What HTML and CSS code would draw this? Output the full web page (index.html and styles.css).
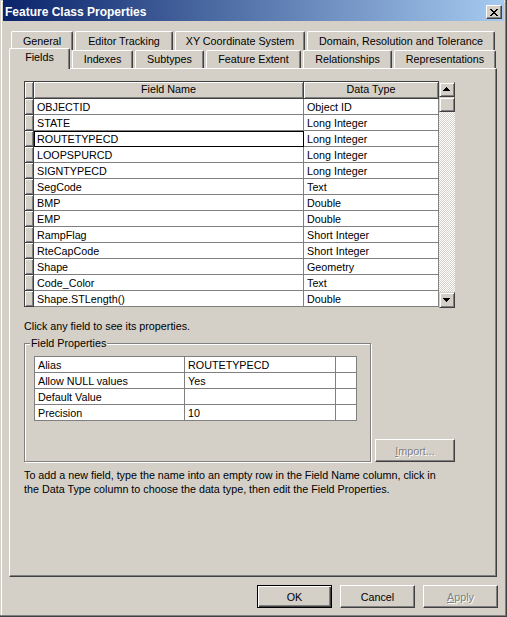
FILE: index.html
```html
<!DOCTYPE html>
<html lang="en">
<head>
    <meta charset="UTF-8">
    <meta name="viewport" content="width=device-width, initial-scale=1.0">
    <title>Feature Class Properties</title>
    <link rel="stylesheet" href="styles.css">
</head>
<body>
    <div class="window">
        <div class="titlebar">
            <span class="title">Feature Class Properties</span>
            <button class="close">
                <svg width="8" height="7" viewBox="0 0 8 7"><path d="M0 0h2v1H0zM6 0h2v1H6zM1 1h2v1H1zM5 1h2v1H5zM2 2h4v1H2zM3 3h2v1H3zM2 4h4v1H2zM1 5h2v1H1zM5 5h2v1H5zM0 6h2v1H0zM6 6h2v1H6z" fill="#000"/></svg>
            </button>
        </div>

        <div class="dialog">
            <div class="tab-row back">
                <div class="tab t-general">General</div>
                <div class="tab t-editor">Editor Tracking</div>
                <div class="tab t-xy">XY Coordinate System</div>
                <div class="tab t-domain">Domain, Resolution and Tolerance</div>
            </div>
            <div class="tab-row front">
                <div class="tab t-fields active">Fields</div>
                <div class="tab t-indexes">Indexes</div>
                <div class="tab t-subtypes">Subtypes</div>
                <div class="tab t-extent">Feature Extent</div>
                <div class="tab t-rel">Relationships</div>
                <div class="tab t-rep">Representations</div>
            </div>

            <div class="panel">
                <div class="grid">
                    <div class="fields">
                        <div class="hd"></div>
                        <div class="hd">Field Name</div>
                        <div class="hd">Data Type</div>

                        <div class="rh"></div><div class="cell">OBJECTID</div><div class="cell">Object ID</div>
                        <div class="rh"></div><div class="cell">STATE</div><div class="cell">Long Integer</div>
                        <div class="rh"></div><div class="cell current">ROUTETYPECD</div><div class="cell">Long Integer</div>
                        <div class="rh"></div><div class="cell">LOOPSPURCD</div><div class="cell">Long Integer</div>
                        <div class="rh"></div><div class="cell">SIGNTYPECD</div><div class="cell">Long Integer</div>
                        <div class="rh"></div><div class="cell">SegCode</div><div class="cell">Text</div>
                        <div class="rh"></div><div class="cell">BMP</div><div class="cell">Double</div>
                        <div class="rh"></div><div class="cell">EMP</div><div class="cell">Double</div>
                        <div class="rh"></div><div class="cell">RampFlag</div><div class="cell">Short Integer</div>
                        <div class="rh"></div><div class="cell">RteCapCode</div><div class="cell">Short Integer</div>
                        <div class="rh"></div><div class="cell">Shape</div><div class="cell">Geometry</div>
                        <div class="rh"></div><div class="cell">Code_Color</div><div class="cell">Text</div>
                        <div class="rh"></div><div class="cell">Shape.STLength()</div><div class="cell">Double</div>
                    </div>
                    <div class="scroll">
                        <div class="sbtn up">
                            <svg width="16" height="15" viewBox="0 0 16 15"><path d="M7 5h1v1h1v1h1v1h1v1H4V8h1V7h1V6h1z" fill="#000"/></svg>
                        </div>
                        <div class="sbtn thumb"></div>
                        <div class="track"></div>
                        <div class="sbtn down">
                            <svg width="16" height="16" viewBox="0 0 16 16"><path d="M4 6h7v1h-1v1h-1v1h-1v1H7V9H6V8H5V7H4z" fill="#000"/></svg>
                        </div>
                    </div>
                </div>

                <p class="hint">Click any field to see its properties.</p>

                <div class="props-row">
                    <fieldset class="props">
                        <legend>Field Properties</legend>
                        <div class="ptable">
                            <div class="pcell">Alias</div><div class="pcell">ROUTETYPECD</div><div class="pcell"></div>
                            <div class="pcell">Allow NULL values</div><div class="pcell">Yes</div><div class="pcell"></div>
                            <div class="pcell">Default Value</div><div class="pcell"></div><div class="pcell"></div>
                            <div class="pcell">Precision</div><div class="pcell">10</div><div class="pcell"></div>
                        </div>
                    </fieldset>
                    <button class="btn import" disabled><u>I</u>mport...</button>
                </div>

                <p class="help">To add a new field, type the name into an empty row in the Field Name column, click in<br>the Data Type column to choose the data type, then edit the Field Properties.</p>
            </div>

            <div class="buttons">
                <button class="btn default">OK</button>
                <button class="btn">Cancel</button>
                <button class="btn" disabled><u>A</u>pply</button>
            </div>
        </div>
    </div>
</body>
</html>
```

FILE: styles.css
```css
* {
    box-sizing: border-box;
}
body {
    margin: 0;
    background-color: #d4d0c8;
    font-family: "Liberation Sans", Arial, sans-serif;
    font-size: 10.75px;
    color: #000;
}
.window {
    width: 507px;
    height: 617px;
    padding: 0 3px 3px 3px;
    box-shadow: inset -1px -1px #404040, inset -2px -2px #808080, inset 1px 1px #d4d0c8, inset 2px 2px #fff;
}

/* caption */
.titlebar {
    height: 21px;
    padding: 3px 2px 0 2px;
    display: flex;
    align-items: center;
    justify-content: space-between;
    background: linear-gradient(to right, #0a246a, #a6caf0);
}
.title {
    color: #fff;
    font-weight: bold;
    font-size: 12px;
}
.close {
    width: 16px;
    height: 14px;
    padding: 0;
    margin: 0;
    display: flex;
    align-items: center;
    justify-content: center;
    background: #d4d0c8;
    border: 1px solid;
    border-color: #fff #404040 #404040 #fff;
    box-shadow: inset -1px -1px #808080;
}

.dialog {
    padding: 10px 7px 0 6px;
}

/* tabs */
.tab-row {
    display: flex;
    gap: 2px;
}
.tab-row.back {
    height: 19px;
    padding-left: 2px;
}
.tab-row.front {
    height: 18px;
}
.tab {
    border: 1px solid;
    border-color: #fff #404040 #fff #fff;
    border-bottom: none;
    border-radius: 2px 2px 0 0;
    box-shadow: inset -1px 0 #808080;
    background: #d4d0c8;
    text-align: center;
    white-space: nowrap;
}
.back .tab {
    height: 19px;
    line-height: 18px;
}
.front .tab {
    height: 18px;
    line-height: 16px;
}
.front .tab.active {
    position: relative;
    height: 21px;
    margin-top: -2px;
}
.t-general { width: 62px; }
.t-editor { width: 98px; }
.t-xy { width: 130px; }
.t-domain { width: 188px; }
.t-fields { width: 61px; }
.t-indexes { width: 61px; }
.t-subtypes { width: 69px; }
.t-extent { width: 95px; }
.t-rel { width: 89px; }
.t-rep { width: 102px; }

.panel {
    height: 509px;
    padding: 12px 0 0 14px;
    border: 1px solid;
    border-color: #fff #404040 #404040 #fff;
    box-shadow: inset -1px -1px #808080;
}

/* fields grid */
.grid {
    display: flex;
    align-items: flex-start;
}
.fields {
    display: grid;
    grid-template-columns: 9px 270px 135px;
    grid-template-rows: 17px;
    grid-auto-rows: 16px;
    border-left: 1px solid #404040;
    border-top: 1px solid #404040;
}
.hd {
    background: #d4d0c8;
    border-right: 1px solid #404040;
    border-bottom: 1px solid #404040;
    box-shadow: inset 1px 1px #fff, inset -1px -1px #808080;
    text-align: center;
    line-height: 15px;
}
.rh {
    background: #d4d0c8;
    border-right: 1px solid #404040;
    border-bottom: 1px solid #404040;
    box-shadow: inset 1px 1px #fff, inset -1px -1px #808080;
}
.cell {
    background: #fff;
    border-right: 1px solid #808080;
    border-bottom: 1px solid #808080;
    padding-left: 3px;
    line-height: 16px;
    white-space: nowrap;
    overflow: hidden;
}
.cell.current {
    border-color: #000;
    box-shadow: inset 1px 1px #000;
}

.scroll {
    width: 16px;
    height: 226px;
    margin-top: 1px;
    display: flex;
    flex-direction: column;
}
.sbtn {
    background: #d4d0c8;
    border: 1px solid;
    border-color: #d4d0c8 #404040 #404040 #d4d0c8;
    box-shadow: inset 1px 1px #fff, inset -1px -1px #808080;
    display: flex;
    align-items: center;
    justify-content: center;
}
.sbtn svg {
    flex: none;
}
.sbtn.up {
    height: 15px;
}
.sbtn.thumb {
    height: 15px;
}
.sbtn.down {
    height: 16px;
}
.track {
    flex: 1;
    background: repeating-conic-gradient(#fff 0 25%, #d4d0c8 0 50%) 0 0 / 2px 2px;
}

.hint {
    margin: 11px 0 0;
    line-height: 14px;
}

/* field properties group */
.props-row {
    display: flex;
    align-items: flex-end;
    gap: 4px;
    margin-top: 4px;
}
.props {
    width: 347px;
    margin: 0;
    padding: 0 0 40px 9px;
    border: 1px solid #808080;
    box-shadow: inset 1px 1px #fff, 1px 1px #fff;
    min-width: 0;
}
.props legend {
    margin-left: -4px;
    padding: 0 1px;
    line-height: 13px;
    background: #d4d0c8;
}
.ptable {
    display: grid;
    grid-template-columns: 150px 151px 21px;
    grid-auto-rows: 16px;
    width: 323px;
    margin-top: 6px;
    border-left: 1px solid #808080;
    border-top: 1px solid #808080;
}
.pcell {
    background: #fff;
    border-right: 1px solid #808080;
    border-bottom: 1px solid #808080;
    padding-left: 3px;
    line-height: 16px;
    white-space: nowrap;
}

.help {
    margin: 6px 0 0;
    line-height: 14px;
}

/* push buttons */
.btn {
    width: 75px;
    height: 23px;
    margin: 0;
    padding: 0;
    font-family: inherit;
    font-size: 10.75px;
    color: #000;
    background: #d4d0c8;
    border: 1px solid;
    border-color: #fff #404040 #404040 #fff;
    box-shadow: inset -1px -1px #808080;
}
.btn.default {
    border-color: #000;
    box-shadow: inset 1px 1px #fff, inset -1px -1px #404040, inset -2px -2px #808080;
}
.btn:disabled {
    color: #808080;
    text-shadow: 1px 1px #fff;
}
.btn.import {
    width: 80px;
}
.buttons {
    display: flex;
    justify-content: flex-end;
    gap: 8px;
    margin: 8px -1px 0 0;
}
```
